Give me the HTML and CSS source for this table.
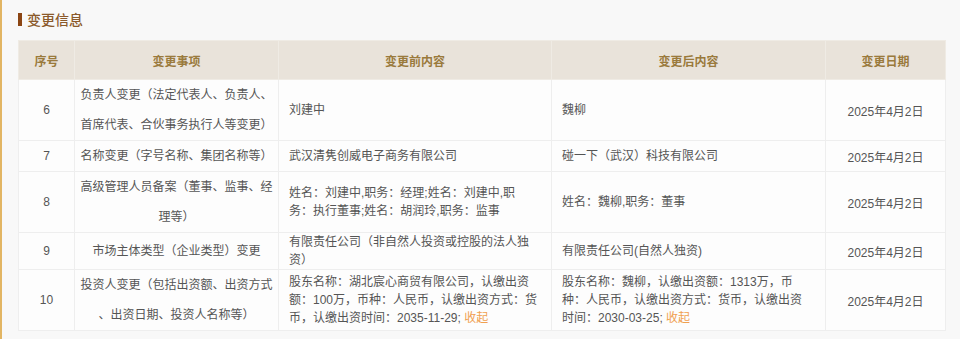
FILE: index.html
```html
<!DOCTYPE html>
<html lang="zh-CN">
<head>
<meta charset="utf-8">
<title>变更信息</title>
<link rel="stylesheet" href="styles.css">
</head>
<body>
<div class="page">
  <h2 class="title">变更信息</h2>
  <table class="changes">
    <colgroup>
      <col class="c-no"><col class="c-item"><col class="c-before"><col class="c-after"><col class="c-date">
    </colgroup>
    <thead>
      <tr><th>序号</th><th>变更事项</th><th>变更前内容</th><th>变更后内容</th><th>变更日期</th></tr>
    </thead>
    <tbody>
      <tr>
        <td class="no">6</td>
        <td class="item">负责人变更（法定代表人、负责人、<br>首席代表、合伙事务执行人等变更）</td>
        <td class="txt">刘建中</td>
        <td class="txt">魏柳</td>
        <td class="date">2025年4月2日</td>
      </tr>
      <tr>
        <td class="no">7</td>
        <td class="item">名称变更（字号名称、集团名称等）</td>
        <td class="txt">武汉清隽创威电子商务有限公司</td>
        <td class="txt">碰一下（武汉）科技有限公司</td>
        <td class="date">2025年4月2日</td>
      </tr>
      <tr>
        <td class="no">8</td>
        <td class="item">高级管理人员备案（董事、监事、经<br>理等）</td>
        <td class="txt">姓名：刘建中,职务：经理;姓名：刘建中,职<br>务：执行董事;姓名：胡润玲,职务：监事</td>
        <td class="txt">姓名：魏柳,职务：董事</td>
        <td class="date">2025年4月2日</td>
      </tr>
      <tr>
        <td class="no">9</td>
        <td class="item">市场主体类型（企业类型）变更</td>
        <td class="txt">有限责任公司（非自然人投资或控股的法人独<br>资）</td>
        <td class="txt">有限责任公司(自然人独资)</td>
        <td class="date">2025年4月2日</td>
      </tr>
      <tr>
        <td class="no">10</td>
        <td class="item">投资人变更（包括出资额、出资方式<br>、出资日期、投资人名称等）</td>
        <td class="txt">股东名称：湖北宸心商贸有限公司，认缴出资<br>额：100万，币种：人民币，认缴出资方式：货<br>币，认缴出资时间：2035-11-29; <a class="fold" href="#">收起</a></td>
        <td class="txt">股东名称：魏柳，认缴出资额：1313万，币<br>种：人民币，认缴出资方式：货币，认缴出资<br>时间：2030-03-25; <a class="fold" href="#">收起</a></td>
        <td class="date">2025年4月2日</td>
      </tr>
    </tbody>
  </table>
</div>
</body>
</html>
```
FILE: styles.css
```css
html, body {
  margin: 0;
  padding: 0;
}
body {
  background: #f8f8f8;
  font-family: "Liberation Sans", "Noto Sans CJK SC", sans-serif;
  min-height: 100vh;
  border-left: 2px solid #e2b563;
  box-sizing: border-box;
}
.page {
  padding: 10px 0 0 16px;
}
.title {
  display: flex;
  align-items: center;
  gap: 5px;
  margin: 0 0 12px 0;
  height: 18px;
  font-size: 14px;
  font-weight: 500;
  color: #8b5a2b;
}
.title::before {
  content: "";
  display: block;
  width: 4px;
  height: 13px;
  background: #8b4513;
}
.changes {
  width: 927px;
  border-collapse: collapse;
  table-layout: fixed;
  background: #fdfdfd;
  font-size: 12px;
  color: #555;
}
.c-no { width: 56px; }
.c-item { width: 204px; }
.c-before { width: 273px; }
.c-after { width: 274px; }
.c-date { width: 120px; }
.changes th {
  height: 38px;
  background: #e9e3da;
  color: #9a7a3c;
  font-weight: bold;
  text-align: center;
  border: 1px solid #efebe4;
  padding: 0;
}
.changes td {
  border: 1px solid #eeeeee;
  padding: 0;
  vertical-align: middle;
  white-space: nowrap;
}
.no, .date {
  text-align: center;
}
.item {
  text-align: center;
  line-height: 30px;
}
.txt {
  text-align: left;
  line-height: 18px;
  padding: 0 10px !important;
}
.fold {
  color: #f0a050;
  text-decoration: none;
}
```
